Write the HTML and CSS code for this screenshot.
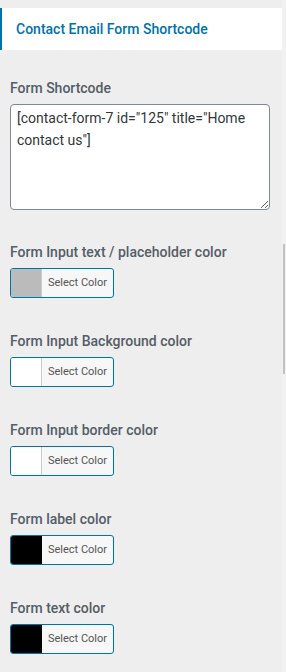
FILE: index.html
```html
<!DOCTYPE html>
<html lang="en">
<head>
  <meta charset="UTF-8">
  <title>Contact Email Form Shortcode</title>
  <link rel="stylesheet" href="styles.css">
</head>
<body>
  <div class="page">
    <div class="panel">
      <div class="panel-title">Contact Email Form Shortcode</div>

      <div class="field field-first">
        <label class="field-label">Form Shortcode</label>
        <textarea class="shortcode" readonly>[contact-form-7 id="125" title="Home contact us"]</textarea>
      </div>

      <div class="field">
        <label class="field-label">Form Input text / placeholder color</label>
        <button class="color-btn"><span class="swatch swatch-grey"></span><span class="color-text">Select Color</span></button>
      </div>

      <div class="field">
        <label class="field-label">Form Input Background color</label>
        <button class="color-btn"><span class="swatch"></span><span class="color-text">Select Color</span></button>
      </div>

      <div class="field">
        <label class="field-label">Form Input border color</label>
        <button class="color-btn"><span class="swatch"></span><span class="color-text">Select Color</span></button>
      </div>

      <div class="field">
        <label class="field-label">Form label color</label>
        <button class="color-btn"><span class="swatch swatch-black"></span><span class="color-text">Select Color</span></button>
      </div>

      <div class="field">
        <label class="field-label">Form text color</label>
        <button class="color-btn"><span class="swatch swatch-black"></span><span class="color-text">Select Color</span></button>
      </div>
    </div>

    <div class="scroll-track"><div class="scroll-thumb"></div></div>
  </div>
</body>
</html>
```

FILE: styles.css
```css
html, body {
  margin: 0;
  padding: 0;
  height: 100%;
  overflow: hidden;
}

body {
  background: #eeeeee;
  font-family: Roboto, 'Liberation Sans', sans-serif;
}

.page {
  display: flex;
  height: 100%;
}

.panel {
  flex: 1;
  padding-top: 8px;
}

.panel-title {
  background: #fff;
  border-left: 2px solid #0073aa;
  height: 42px;
  line-height: 42px;
  padding-left: 14px;
  font-size: 14px;
  font-weight: 500;
  color: #0073aa;
}

.field {
  padding: 0 10px;
  margin-top: 33px;
}

.field-first {
  margin-top: 28px;
}

.field-first + .field {
  margin-top: 32px;
}

.field-label {
  display: block;
  font-size: 14px;
  font-weight: 500;
  line-height: 20px;
  color: #555d66;
  margin-bottom: 6px;
}

.shortcode {
  display: block;
  box-sizing: border-box;
  width: 260px;
  height: 106px;
  margin: 0;
  padding: 2px 6px;
  border: 1px solid #7e8993;
  border-radius: 4px;
  background: #fff;
  font-family: Roboto, 'Liberation Sans', sans-serif;
  font-size: 14px;
  line-height: 22px;
  color: #32373c;
  outline: none;
}

.color-btn {
  display: flex;
  box-sizing: border-box;
  width: 104px;
  height: 30px;
  margin: 0;
  padding: 0;
  border: 1px solid #0073aa;
  border-radius: 3px;
  background: #f7f7f7;
  overflow: hidden;
  cursor: pointer;
  font-family: Roboto, 'Liberation Sans', sans-serif;
}

.swatch {
  width: 30px;
  height: 100%;
  background: #fff;
  border-right: 1px solid #ccc;
}

.swatch-grey { background: #bbbbbb; }
.swatch-black { background: #000; border-right-color: #000; }

.color-text {
  flex: 1;
  font-size: 11px;
  line-height: 28px;
  color: #555;
  text-align: center;
}

.scroll-track {
  width: 4px;
  background: #f1f1f1;
  padding-top: 244px;
}

.scroll-thumb {
  width: 2px;
  margin-left: 1px;
  height: 130px;
  background: #c1c1c1;
}
```
